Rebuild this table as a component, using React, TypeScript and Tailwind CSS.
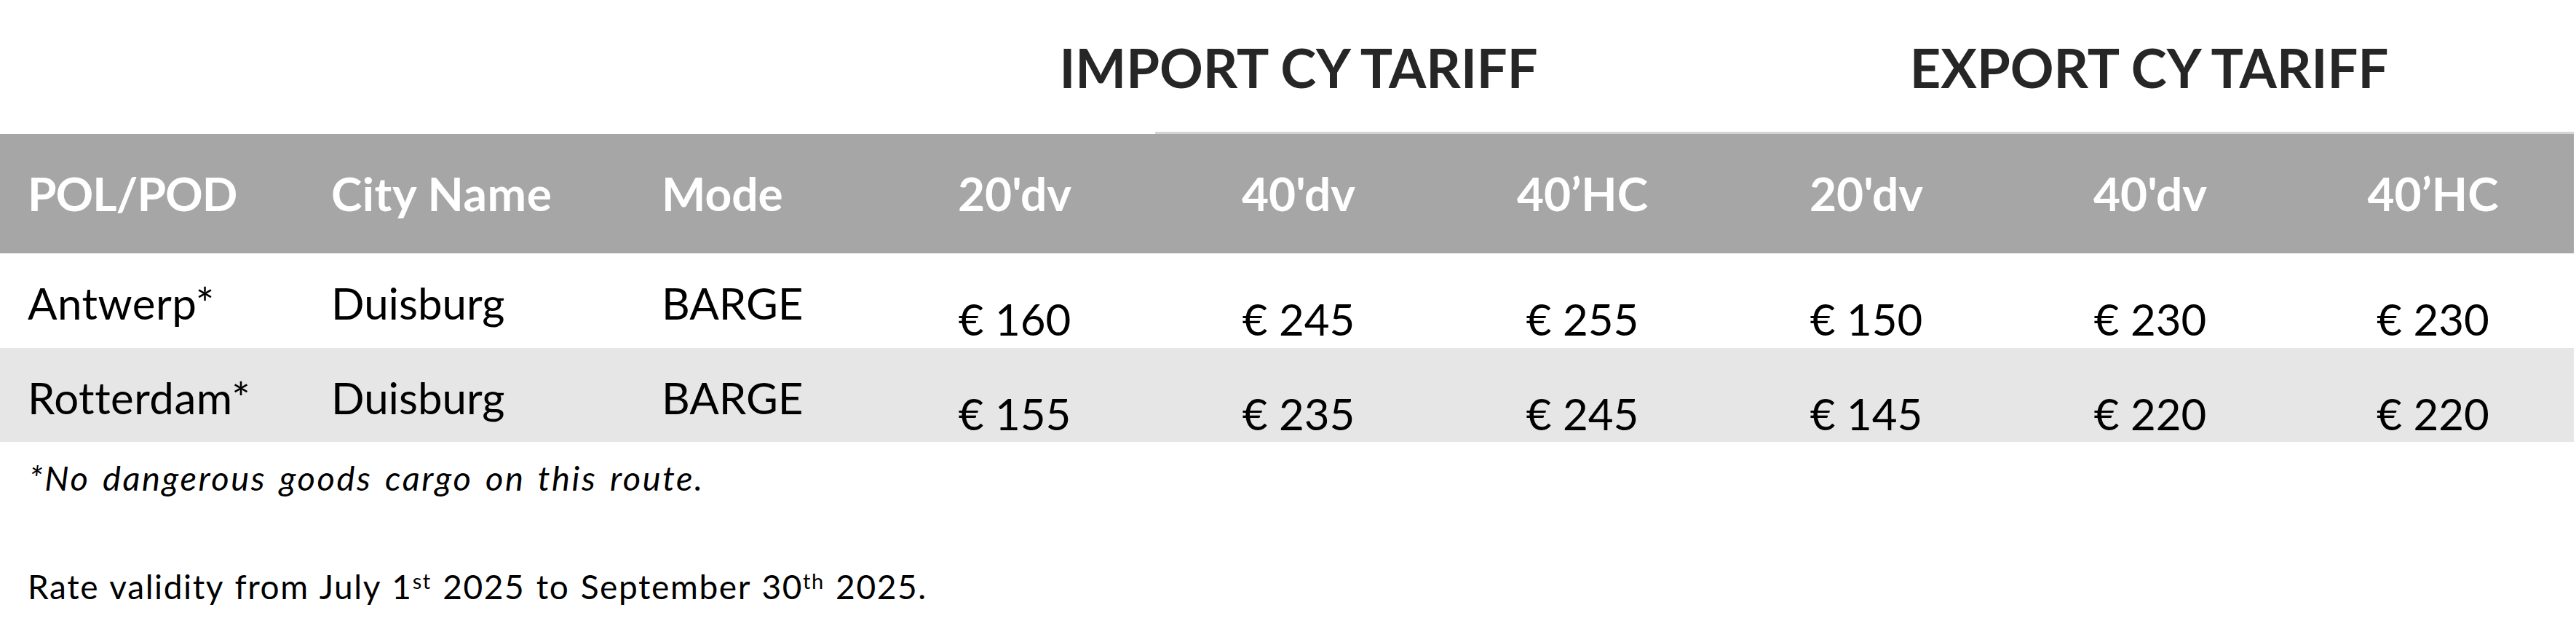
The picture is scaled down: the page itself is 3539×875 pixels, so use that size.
import React from "react";

const cols = "grid grid-cols-[417px_454px_328px_390px_390px_390px_390px_390px_387px]";

const rows = [
  { pol: "Antwerp*", city: "Duisburg", mode: "BARGE", prices: ["€ 160", "€ 245", "€ 255", "€ 150", "€ 230", "€ 230"], bg: "bg-white" },
  { pol: "Rotterdam*", city: "Duisburg", mode: "BARGE", prices: ["€ 155", "€ 235", "€ 245", "€ 145", "€ 220", "€ 220"], bg: "bg-[#e7e6e6]" },
];

const heads = ["20'dv", "40'dv", "40’HC", "20'dv", "40'dv", "40’HC"];

export default function App() {
  return (
    <div className="w-[3539px] h-[875px] bg-white text-black font-['Lato','Liberation_Sans',sans-serif] overflow-hidden">
      {/* titles */}
      <div className={`${cols} h-[181px]`}>
        <div className="col-span-3" />
        <div className="col-span-3 flex justify-center pt-[49px] text-[74px] font-bold leading-[88px] text-[#262626]">
          IMPORT CY TARIFF
        </div>
        <div className="col-span-3 flex justify-center pt-[49px] text-[74px] font-bold leading-[88px] text-[#262626]">
          EXPORT CY TARIFF
        </div>
      </div>
      {/* header band */}
      <div className="flex h-[3px]">
        <div className="w-[1587px] bg-white" />
        <div className="w-[1949px] bg-[#d4d4d4]" />
      </div>
      <div className={`${cols} h-[164px] bg-[#a6a6a6] w-[3536px] text-white font-bold text-[64px]`}>
        <div className="flex items-center pl-[38px] tracking-[-1px]">POL/POD</div>
        <div className="flex items-center pl-[38px] tracking-[0.5px]">City Name</div>
        <div className="flex items-center pl-[38px]">Mode</div>
        {heads.map((h, i) => (
          <div key={i} className="flex items-center justify-center">{h}</div>
        ))}
      </div>
      {rows.map((r, ri) => (
        <div key={ri} className={`${cols} ${ri === 0 ? "h-[130px]" : "h-[129px]"} ${r.bg} w-[3536px] text-[60px]`}>
          <div className="flex items-center pl-[38px] tracking-[0.5px]">{r.pol}</div>
          <div className="flex items-center pl-[38px]">{r.city}</div>
          <div className="flex items-center pl-[38px]">{r.mode}</div>
          {r.prices.map((p, i) => (
            <div key={i} className="flex items-center justify-center pt-[45px]">{p}</div>
          ))}
        </div>
      ))}
      <div className="pl-[40px] pt-[20px] text-[47px] italic leading-[58px] tracking-[2.6px] [word-spacing:4px]">
        *No dangerous goods cargo on this route.
      </div>
      <div className="pl-[38px] pt-[92px] text-[46px] leading-[58px] tracking-[1.6px] [word-spacing:2px]">
        Rate validity from July 1<sup className="text-[29px]">st</sup> 2025 to September 30<sup className="text-[29px]">th</sup> 2025.
      </div>
    </div>
  );
}
